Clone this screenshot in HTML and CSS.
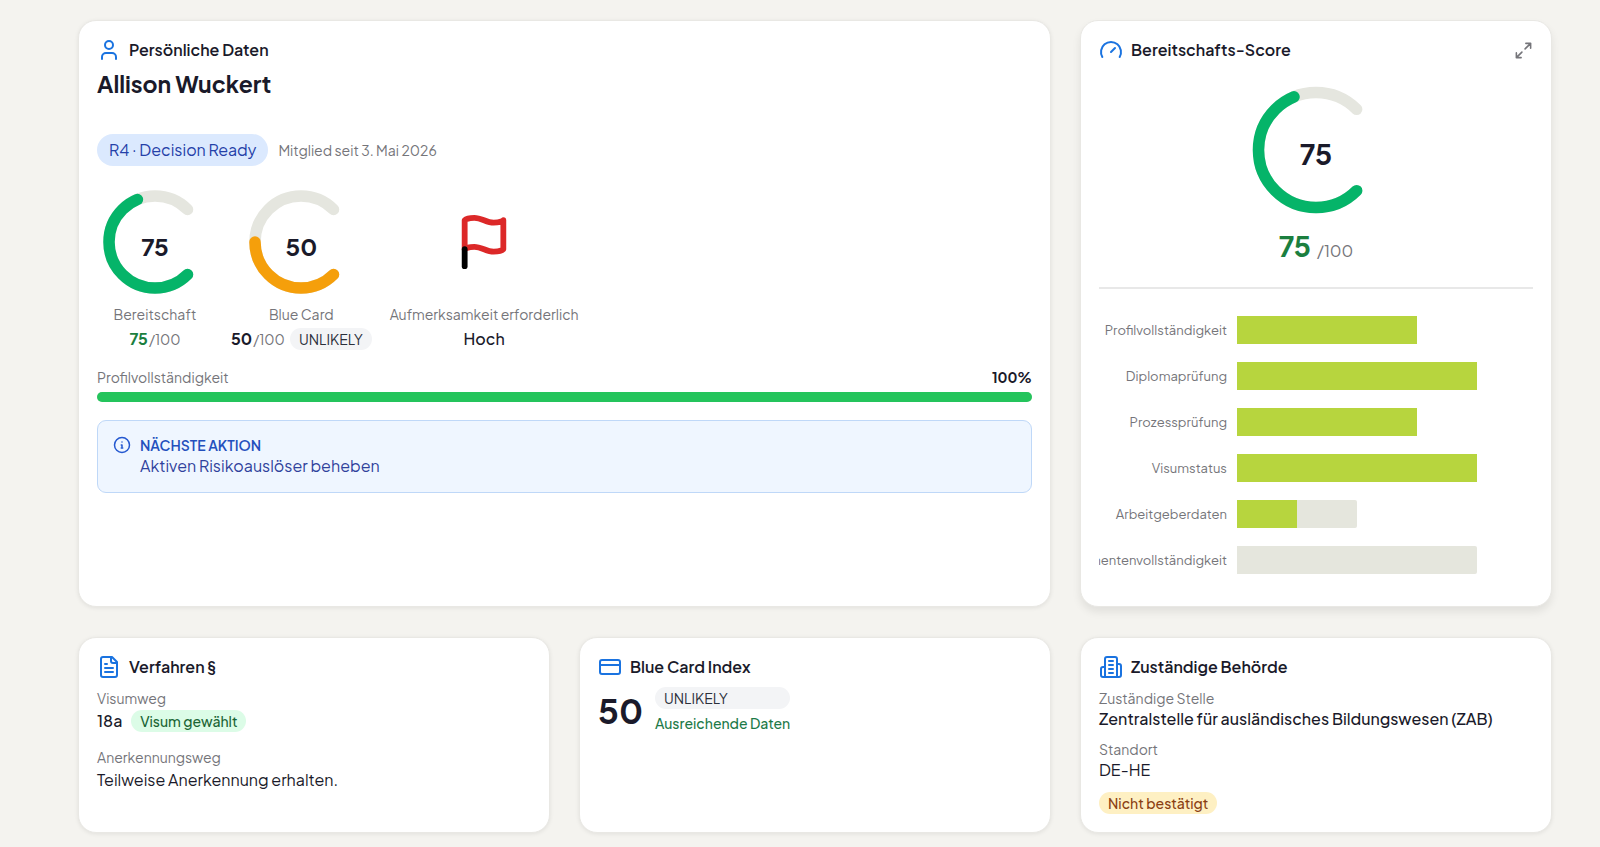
FILE: index.html
```
<!DOCTYPE html>
<html lang="de">
<head>
  <meta charset="UTF-8" />
  <meta name="viewport" content="width=device-width, initial-scale=1" />
  <title>Persönliche Daten</title>
  <link rel="stylesheet" href="styles.css">
</head>
<body>
<main class="dashboard">

  <!-- Personal data -->
  <section class="card card-wide">
    <header class="card-header">
      <svg class="icon" viewBox="0 0 24 24"><path d="M19 21v-2a4 4 0 0 0-4-4H9a4 4 0 0 0-4 4v2"/><circle cx="12" cy="7" r="4"/></svg>
      <h2>Persönliche Daten</h2>
    </header>
    <h1 class="name">Allison Wuckert</h1>
    <div class="member">
      <span class="stage">R4 · Decision Ready</span>
      <span class="label">Mitglied seit 3. Mai 2026</span>
    </div>

    <div class="metrics">
      <div class="metric">
        <div class="gauge">
          <svg viewBox="0 0 116 116">
            <circle class="track" cx="58" cy="58" r="46" pathLength="360" stroke-dasharray="270 360" transform="rotate(45 58 58)"/>
            <circle class="fill green" cx="58" cy="58" r="46" pathLength="360" stroke-dasharray="202.5 360" transform="rotate(45 58 58)"/>
          </svg>
          <span class="gauge-value">75</span>
        </div>
        <span class="label">Bereitschaft</span>
        <div class="score"><b class="good">75</b><span class="label">/100</span></div>
      </div>
      <div class="metric">
        <div class="gauge">
          <svg viewBox="0 0 116 116">
            <circle class="track" cx="58" cy="58" r="46" pathLength="360" stroke-dasharray="270 360" transform="rotate(45 58 58)"/>
            <circle class="fill amber" cx="58" cy="58" r="46" pathLength="360" stroke-dasharray="135 360" transform="rotate(45 58 58)"/>
          </svg>
          <span class="gauge-value">50</span>
        </div>
        <span class="label">Blue Card</span>
        <div class="score"><b>50</b><span class="label">/100</span><span class="badge grey">UNLIKELY</span></div>
      </div>
      <div class="metric">
        <div class="gauge">
          <svg class="flag" viewBox="0 0 24 24">
            <path class="flag-cloth" d="M4 15s1-1 4-1 5 2 8 2 4-1 4-1V3s-1 1-4 1-5-2-8-2-4 1-4 1z"/>
            <path class="flag-pole" d="M4 22v-7"/>
          </svg>
        </div>
        <span class="label">Aufmerksamkeit erforderlich</span>
        <div class="score medium">Hoch</div>
      </div>
    </div>

    <div class="progress-head">
      <span class="label">Profilvollständigkeit</span>
      <span class="percent">100%</span>
    </div>
    <div class="progress"><div class="progress-fill" style="width: 100%"></div></div>

    <div class="next-action">
      <svg class="icon-info" viewBox="0 0 24 24"><circle cx="12" cy="12" r="10"/><path d="M12 16v-4h-1M11 16h2M12 8h.01"/></svg>
      <div>
        <h3>NÄCHSTE AKTION</h3>
        <p>Aktiven Risikoauslöser beheben</p>
      </div>
    </div>
  </section>

  <!-- Readiness score -->
  <section class="card card-raised">
    <header class="card-header">
      <svg class="icon" viewBox="0 0 24 24"><path d="m12 14 4-4"/><path d="M3.34 19a10 10 0 1 1 17.32 0"/></svg>
      <h2>Bereitschafts-Score</h2>
      <button class="expand" type="button" aria-label="Vergrößern">
        <svg viewBox="0 0 24 24"><path d="M15 3h6v6M9 21H3v-6M21 3l-7 7M3 21l7-7"/></svg>
      </button>
    </header>
    <div class="gauge gauge-large">
      <svg viewBox="0 0 142 142">
        <circle class="track" cx="71" cy="71" r="57.5" pathLength="360" stroke-dasharray="270 360" transform="rotate(45 71 71)"/>
        <circle class="fill green" cx="71" cy="71" r="57.5" pathLength="360" stroke-dasharray="202.5 360" transform="rotate(45 71 71)"/>
      </svg>
      <span class="gauge-value">75</span>
    </div>
    <div class="score score-large"><b class="good">75</b><span>/100</span></div>
    <hr>
    <div class="chart">
      <span class="chart-label">Profilvollständigkeit</span>
      <div class="bar"><div class="done" style="width: 75%"></div></div>
      <span class="chart-label">Diplomaprüfung</span>
      <div class="bar"><div class="done" style="width: 100%"></div></div>
      <span class="chart-label">Prozessprüfung</span>
      <div class="bar"><div class="done" style="width: 75%"></div></div>
      <span class="chart-label">Visumstatus</span>
      <div class="bar"><div class="done" style="width: 100%"></div></div>
      <span class="chart-label">Arbeitgeberdaten</span>
      <div class="bar"><div class="done" style="width: 25%"></div><div class="open" style="width: 25%"></div></div>
      <span class="chart-label">Dokumentenvollständigkeit</span>
      <div class="bar"><div class="open" style="width: 100%"></div></div>
    </div>
  </section>

  <!-- Procedure -->
  <section class="card">
    <header class="card-header">
      <svg class="icon" viewBox="0 0 24 24"><path d="M15 2H6a2 2 0 0 0-2 2v16a2 2 0 0 0 2 2h12a2 2 0 0 0 2-2V7Z"/><path d="M14 2v4a2 2 0 0 0 2 2h4M10 9H8M16 13H8M16 17H8"/></svg>
      <h2>Verfahren §</h2>
    </header>
    <dl class="fields fields-loose">
      <div>
        <dt>Visumweg</dt>
        <dd class="medium">18a <span class="badge mint">Visum gewählt</span></dd>
      </div>
      <div>
        <dt>Anerkennungsweg</dt>
        <dd>Teilweise Anerkennung erhalten.</dd>
      </div>
    </dl>
  </section>

  <!-- Blue Card -->
  <section class="card">
    <header class="card-header">
      <svg class="icon" viewBox="0 0 24 24"><rect x="2" y="5" width="20" height="14" rx="2"/><path d="M2 10h20"/></svg>
      <h2>Blue Card Index</h2>
    </header>
    <div class="index">
      <span class="index-value">50</span>
      <div class="index-info">
        <span class="badge grey">UNLIKELY</span>
        <span class="index-note">Ausreichende Daten</span>
      </div>
    </div>
  </section>

  <!-- Authority -->
  <section class="card">
    <header class="card-header">
      <svg class="icon" viewBox="0 0 24 24"><path d="M6 22V4a2 2 0 0 1 2-2h8a2 2 0 0 1 2 2v18Z"/><path d="M6 12H4a2 2 0 0 0-2 2v6a2 2 0 0 0 2 2h2M18 9h2a2 2 0 0 1 2 2v9a2 2 0 0 1-2 2h-2M10 6h4M10 10h4M10 14h4M10 18h4"/></svg>
      <h2>Zuständige Behörde</h2>
    </header>
    <dl class="fields">
      <div>
        <dt>Zuständige Stelle</dt>
        <dd class="medium">Zentralstelle für ausländisches Bildungswesen (ZAB)</dd>
      </div>
      <div>
        <dt>Standort</dt>
        <dd>DE-HE</dd>
      </div>
    </dl>
    <span class="badge yellow">Nicht bestätigt</span>
  </section>

</main>
</body>
</html>
```
FILE: styles.css
```
* {
  box-sizing: border-box;
}

body {
  margin: 0;
  background: #f4f3ef;
  color: #1a1a2a;
  font-family: "Plus Jakarta Sans", Inter, sans-serif;
  font-size: 16px;
  line-height: 22px;
}

h1, h2, h3, p, dl, dd {
  margin: 0;
}

.dashboard {
  display: grid;
  grid-template-columns: repeat(3, minmax(0, 1fr));
  gap: 30px 29px;
  padding: 20px 48px 15px 78px;
}

.card {
  padding: 17px 18px 18px;
  background: #fff;
  border: 1px solid #e9e8e4;
  border-radius: 18px;
  box-shadow: 0 1px 4px rgba(0, 0, 0, 0.08);
}

.card-wide {
  grid-column: span 2;
}

.card-raised {
  box-shadow: 0 5px 9px rgba(0, 0, 0, 0.08);
}

.card-header {
  display: flex;
  align-items: center;
  gap: 8px;
  height: 24px;
}

.card-header h2 {
  font-size: 16px;
  font-weight: 600;
}

svg {
  display: block;
  fill: none;
  stroke-linecap: round;
  stroke-linejoin: round;
}

.icon {
  width: 24px;
  height: 24px;
  stroke: #1a73e0;
  stroke-width: 2;
}

.label, dt {
  color: #75757a;
  font-size: 14px;
  font-weight: 400;
  line-height: 20px;
}

.medium {
  font-weight: 500;
}

.good {
  color: #1b7f3f;
}

/* Name and membership */
.name {
  margin-top: 6px;
  font-size: 23px;
  font-weight: 700;
  line-height: 32px;
}

.member {
  display: flex;
  align-items: center;
  gap: 10px;
  margin-top: 34px;
}

.stage {
  padding: 5px 12px;
  border-radius: 16px;
  background: #dbe9fe;
  color: #2440a8;
}

/* Gauges */
.metrics {
  display: flex;
  gap: 18px;
  margin-top: 18px;
}

.metric {
  display: flex;
  flex-direction: column;
  align-items: center;
  gap: 4px;
}

.gauge {
  display: grid;
  place-items: center;
  width: 116px;
  height: 116px;
}

.gauge > * {
  grid-area: 1 / 1;
}

.gauge circle {
  stroke-width: 11.5;
}

.track {
  stroke: #e5e6df;
}

.fill.green {
  stroke: #05b469;
}

.fill.amber {
  stroke: #f59f0b;
}

.gauge-value {
  padding-top: 8px;
  font-size: 24px;
  font-weight: 700;
}

.gauge-large {
  width: 142px;
  height: 142px;
  margin: 17px auto 7px;
}

.gauge-large .gauge-value {
  font-size: 28px;
}

.flag {
  width: 58px;
  height: 58px;
  stroke-width: 2.4;
}

.flag-cloth {
  stroke: #dc2828;
}

.flag-pole {
  stroke: #000;
}

.score {
  display: flex;
  align-items: center;
  gap: 1px;
}

.score b {
  font-weight: 700;
}

.score .badge {
  margin-left: 4px;
}

.score-large {
  justify-content: center;
  align-items: baseline;
  gap: 6px;
  color: #75757a;
  line-height: 36px;
}

.score-large b {
  font-size: 28px;
}

/* Badges */
.badge {
  display: inline-block;
  padding: 0 9px;
  border-radius: 11px;
  font-size: 14px;
  font-weight: 500;
  line-height: 22px;
}

.badge.grey {
  background: #f3f4f6;
  color: #2b303b;
  font-weight: 400;
}

.badge.mint {
  background: #dcfce7;
  color: #1a6535;
}

.badge.yellow {
  margin-top: 11px;
  background: #fef0c3;
  color: #8a3f12;
}

/* Profile progress */
.progress-head {
  display: flex;
  justify-content: space-between;
  margin-top: 17px;
  line-height: 20px;
}

.percent {
  font-size: 14px;
  font-weight: 700;
}

.progress {
  height: 10px;
  margin-top: 5px;
  border-radius: 5px;
  background: #e5e6df;
}

.progress-fill {
  height: 100%;
  border-radius: 5px;
  background: #24c45c;
}

.next-action {
  display: flex;
  gap: 9px;
  margin-top: 18px;
  padding: 14px 15px 15px;
  border: 1px solid #bfd8f8;
  border-radius: 9px;
  background: #eff6ff;
  color: #2f429c;
}

.next-action h3 {
  color: #2450bd;
  font-size: 14px;
  font-weight: 600;
  line-height: 20px;
}

.icon-info {
  width: 18px;
  height: 18px;
  margin-top: 1px;
  stroke: #2458d0;
  stroke-width: 2;
}

/* Readiness score */
.expand {
  margin-left: auto;
  padding: 0;
  border: 0;
  background: none;
  cursor: pointer;
}

.expand svg {
  width: 19px;
  height: 19px;
  stroke: #75757a;
  stroke-width: 2;
}

hr {
  height: 2px;
  margin: 18px 0 27px;
  border: 0;
  background: #e8e8e8;
}

.chart {
  display: grid;
  grid-template-columns: 128px 1fr;
  gap: 18px 10px;
  padding-bottom: 14px;
}

.chart-label {
  display: flex;
  justify-content: flex-end;
  overflow: hidden;
  color: #75757a;
  font-size: 13px;
  line-height: 28px;
}

.bar {
  display: flex;
  height: 28px;
  margin-right: 56px;
}

.done {
  background: #b7d53e;
}

.open {
  border-radius: 0 2px 2px 0;
  background: #e5e6dd;
}

/* Field lists */
.fields {
  display: grid;
  gap: 9px;
  margin-top: 9px;
}

.fields-loose {
  gap: 15px;
}

.fields-loose dd {
  margin-top: 2px;
}

.fields .badge {
  margin-left: 6px;
}

/* Blue Card index */
.index {
  display: flex;
  align-items: center;
  gap: 12px;
  margin-top: 8px;
}

.index-value {
  font-size: 34px;
  font-weight: 700;
  line-height: 44px;
}

.index-info {
  display: flex;
  flex-direction: column;
  gap: 3px;
}

.index-note {
  color: #1d7a48;
  font-size: 14px;
  font-weight: 500;
}
```
